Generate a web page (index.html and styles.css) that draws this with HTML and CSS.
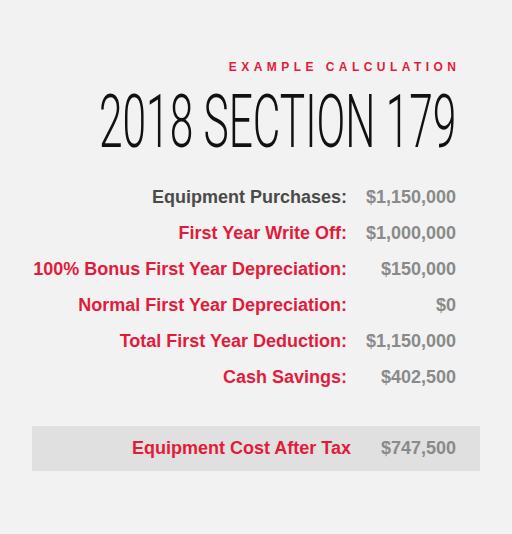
FILE: index.html
```html
<!DOCTYPE html>
<html lang="en">
<head>
    <meta charset="UTF-8">
    <title>2018 Section 179</title>
    <link rel="stylesheet" href="styles.css">
</head>
<body>
    <div id="calc">
        <div class="kicker">Example Calculation</div>
        <h1 class="title"><span>2018 SECTION 179</span></h1>

        <div class="rows">
            <div class="label first">Equipment Purchases:</div>
            <div class="value">$1,150,000</div>
            <div class="label">First Year Write Off:</div>
            <div class="value">$1,000,000</div>
            <div class="label">100% Bonus First Year Depreciation:</div>
            <div class="value">$150,000</div>
            <div class="label">Normal First Year Depreciation:</div>
            <div class="value">$0</div>
            <div class="label">Total First Year Deduction:</div>
            <div class="value">$1,150,000</div>
            <div class="label">Cash Savings:</div>
            <div class="value">$402,500</div>
        </div>

        <div class="total">
            <div class="label">Equipment Cost After Tax</div>
            <div class="value">$747,500</div>
        </div>
    </div>
</body>
</html>
```

FILE: styles.css
```css
body {
    margin: 0;
    background-color: #f2f2f2;
    font-family: "Liberation Sans", Arial, sans-serif;
}
#calc {
    padding: 60px 32px 0 32px;
    width: 448px;
}
.kicker {
    text-align: right;
    padding-right: 24px;
    color: #e31b3b;
    font-size: 12px;
    font-weight: bold;
    letter-spacing: 4.45px;
    margin-right: -4.45px;
    text-transform: uppercase;
    line-height: 14px;
}
.title {
    display: flex;
    justify-content: flex-end;
    margin: 12px 24px 0 0;
    font-family: Roboto, "Liberation Sans", sans-serif;
    font-weight: 300;
    font-size: 75px;
    line-height: 70px;
    color: #111;
}
.title span {
    flex: none;
    white-space: nowrap;
    transform: scaleX(0.566);
    transform-origin: right center;
}
.rows {
    display: grid;
    grid-template-columns: 1fr 109px;
    row-gap: 14px;
    margin-top: 30px;
    padding-right: 24px;
}
.label, .value {
    font-size: 18px;
    font-weight: bold;
    line-height: 22px;
    text-align: right;
}
.label {
    color: #e31b3b;
}
.label.first {
    color: #4a4a4a;
}
.value {
    color: #8a8a8a;
}
.total {
    display: grid;
    grid-template-columns: 1fr 105px;
    margin-top: 38px;
    padding: 11px 24px 12px 0;
    background-color: #e0e0e0;
}
```
